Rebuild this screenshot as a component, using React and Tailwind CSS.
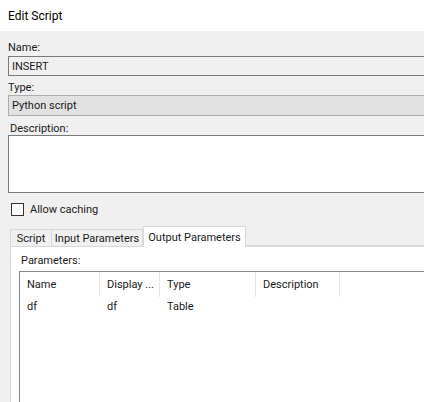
export default function App() {
  const cols = [
    { label: "Name", w: "w-[80px]" },
    { label: "Display ...", w: "w-[60px]" },
    { label: "Type", w: "w-[96px]" },
    { label: "Description", w: "w-[84px]" },
  ];
  const row = ["df", "df", "Table", ""];

  return (
    <div
      className="w-[424px] h-[402px] overflow-hidden bg-[#f0f0f0] text-[11px] text-[#1a1a1a] leading-none"
      style={{ fontFamily: "'Segoe UI', Roboto, 'Liberation Sans', sans-serif" }}
    >
      {/* title bar */}
      <div className="h-[31px] bg-white flex items-center pl-[8px] text-[12px] text-black">
        Edit Script
      </div>

      <div className="pl-[8px]">
        <div className="h-[25px] flex items-end pb-[3px]">Name:</div>
        <div className="h-[20px] w-[500px] bg-[#f0f0f0] border border-[#7a7a7a] flex items-center pl-[3px]">
          INSERT
        </div>
        <div className="h-[19px] flex items-end pb-[2px]">Type:</div>
        <div className="h-[21px] w-[500px] bg-[#e1e1e1] border border-[#adadad] flex items-center pl-[3px]">
          Python script
        </div>
        <div className="h-[19px] flex items-end pb-[1px] pl-[2px]">Description:</div>
        <div className="h-[58px] w-[500px] bg-white border border-[#7a7a7a]" />

        <div className="h-[33px] flex items-center pl-[3px] gap-[6px]">
          <div className="w-[13px] h-[13px] border border-[#333] bg-white" />
          <span>Allow caching</span>
        </div>
      </div>

      {/* tabs */}
      <div className="pl-[10px] flex items-end h-[20px]">
        <div className="w-[42px] h-[17px] flex items-center justify-center border border-b-0 border-[#d9d9d9] bg-[#f0f0f0]">
          Script
        </div>
        <div className="w-[91px] h-[17px] flex items-center justify-center border border-b-0 border-l-0 border-[#d9d9d9] bg-[#f0f0f0]">
          Input Parameters
        </div>
        <div className="w-[103px] h-[21px] flex items-center justify-center border border-b-0 border-[#d9d9d9] bg-white -mb-px relative">
          Output Parameters
        </div>
        <div className="flex-1 border-b border-[#d9d9d9]" />
      </div>

      {/* tab panel */}
      <div className="h-[160px] bg-white border-l border-t border-[#d9d9d9] ml-[10px] pl-[8px]">
        <div className="h-[19px] flex items-end pl-[2px]">Parameters:</div>
        <div className="h-[140px] mt-[5px] border-l border-t border-[#828790] bg-white">
          <div className="flex h-[25px] items-stretch">
            {cols.map((c, i) => (
              <div
                key={i}
                className={`${c.w} shrink-0 flex items-center pl-[7px] border-r border-[#e5e5e5]`}
              >
                {c.label}
              </div>
            ))}
          </div>
          <div className="flex h-[19px] items-center">
            {row.map((v, i) => (
              <div key={i} className={`${cols[i].w} shrink-0 pl-[7px]`}>
                {v}
              </div>
            ))}
          </div>
        </div>
      </div>
    </div>
  );
}
